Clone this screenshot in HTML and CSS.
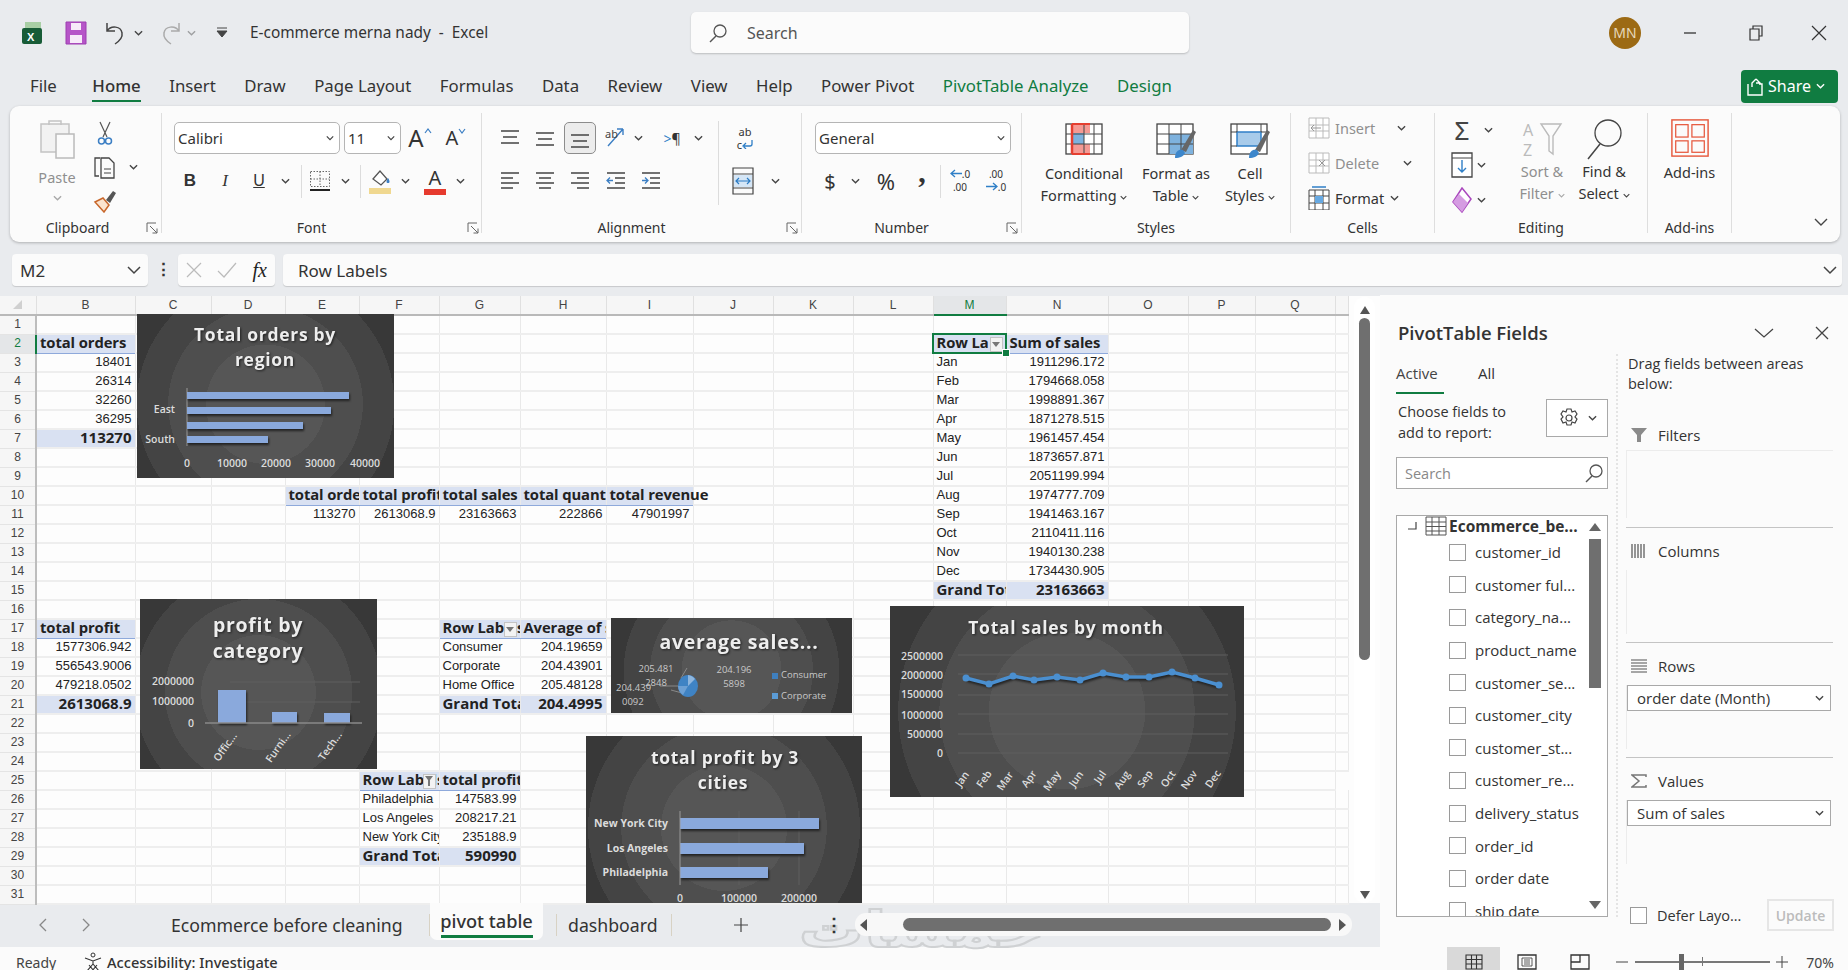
FILE: index.html
```html
<!DOCTYPE html>
<html lang="en">
<head>
<meta charset="utf-8">
<title>E-commerce merna nady - Excel</title>
<link rel="stylesheet" href="styles.css">
</head>
<body>
<svg class="defs" width="0" height="0">
  <symbol id="ch" viewBox="0 0 10 6"><path d="M1 1l4 4 4-4" fill="none" stroke="#444" stroke-width="1.5"/></symbol>
  <symbol id="launch" viewBox="0 0 12 12"><path d="M1 10V1h9M4 4l7 7M11 6.500V11H6.500" fill="none" stroke="#666" stroke-width="1"/></symbol>
  <symbol id="al-top" viewBox="0 0 22 20"><path d="M2 3h18M4 9h14M2 15h18" stroke="#444" stroke-width="1.500"/></symbol>
  <symbol id="al-mid" viewBox="0 0 22 20"><path d="M2 5h18M4 11h14M2 17h18" stroke="#444" stroke-width="1.500"/></symbol>
  <symbol id="al-bot" viewBox="0 0 22 20"><path d="M2 7h18M4 13h14M2 19h18" stroke="#444" stroke-width="1.500"/></symbol>
  <symbol id="al-l" viewBox="0 0 22 20"><path d="M2 2h18M2 7h12M2 12h18M2 17h12" stroke="#444" stroke-width="1.500"/></symbol>
  <symbol id="al-c" viewBox="0 0 22 20"><path d="M2 2h18M5 7h12M2 12h18M5 17h12" stroke="#444" stroke-width="1.500"/></symbol>
  <symbol id="al-r" viewBox="0 0 22 20"><path d="M2 2h18M8 7h12M2 12h18M8 17h12" stroke="#444" stroke-width="1.500"/></symbol>
  <symbol id="search" viewBox="0 0 20 20"><circle cx="12" cy="8" r="6" fill="none" stroke="#555" stroke-width="1.300"/><path d="M8 13l-6 6" stroke="#555" stroke-width="1.500"/></symbol>
</svg>

<header class="titlebar">
  <svg class="t-excel" width="20" height="24" viewBox="0 0 20 24"><rect x="3" y="1" width="16" height="11" fill="#a9cfa5"/><rect x="0" y="7" width="20" height="16" rx="2" fill="#185c37"/><text x="5" y="20" class="xl">X</text></svg>
  <svg class="t-save" width="22" height="24" viewBox="0 0 22 24"><path d="M1 1h20v22H1z" fill="#b655c8" stroke="#9d3fb0"/><rect x="6" y="2" width="10" height="7" fill="#f7eaf9"/><rect x="5" y="14" width="12" height="8" fill="#f7eaf9"/></svg>
  <svg class="t-undo" width="20" height="24" viewBox="0 0 20 24"><path d="M2 2v8h8M2 10c4-6 14-5 15 2 1 5-4 9-7 11" fill="none" stroke="#444" stroke-width="1.500"/></svg>
  <svg class="chv t-ch"><use href="#ch"/></svg>
  <svg class="t-redo" width="20" height="24" viewBox="0 0 20 24"><path d="M18 2v8h-8M18 10c-4-6-14-5-15 2-1 5 4 9 7 11" fill="none" stroke="#aaa" stroke-width="1.500"/></svg>
  <svg class="chv t-ch2 dim"><use href="#ch"/></svg>
  <svg class="t-cust" width="12" height="12" viewBox="0 0 12 12"><path d="M1 1h10M1 4h10L6 10z" fill="#444" stroke="#444"/></svg>
  <div class="doc-title">E-commerce merna nady&nbsp; -&nbsp; Excel</div>
  <div class="searchbox"><svg width="20" height="22"><use href="#search"/></svg><span>Search</span></div>
  <div class="spacer"></div>
  <div class="avatar">MN</div>
  <div class="win-btn"><svg width="14" height="14"><path d="M1 7h12" stroke="#333" stroke-width="1.300"/></svg></div>
  <div class="win-btn"><svg width="14" height="16"><path d="M1 4h9v11H1zM4 4V1h9v10h-3" fill="none" stroke="#333" stroke-width="1.200"/></svg></div>
  <div class="win-btn last"><svg width="16" height="16"><path d="M1 1l14 14M15 1L1 15" stroke="#333" stroke-width="1.200"/></svg></div>
</header>

<nav class="tabs">
  <span class="tab first">File</span>
  <span class="tab on">Home</span>
  <span class="tab">Insert</span>
  <span class="tab">Draw</span>
  <span class="tab">Page Layout</span>
  <span class="tab">Formulas</span>
  <span class="tab">Data</span>
  <span class="tab">Review</span>
  <span class="tab">View</span>
  <span class="tab">Help</span>
  <span class="tab">Power Pivot</span>
  <span class="tab green">PivotTable Analyze</span>
  <span class="tab green">Design</span>
  <div class="share"><svg width="16" height="20" viewBox="0 0 16 20"><path d="M1 8v11h14V8h-3M9 3L5 7v4M9 3l4 4-4 0" fill="none" stroke="#fff" stroke-width="1.400"/></svg><span>Share</span><svg class="chv wh"><use href="#ch"/></svg></div>
</nav>

<section class="ribbon">
  <div class="g g-clip">
    <div class="clip-body">
      <div class="paste">
        <svg width="38" height="42" viewBox="0 0 38 42"><path d="M3 6h28v28H3z" fill="#f2f2f2" stroke="#c4c4c4" stroke-width="1.500"/><path d="M11 7V3h12v4" fill="none" stroke="#c4c4c4" stroke-width="1.500"/><rect x="18" y="16" width="18" height="24" fill="#fbfbfb" stroke="#bbb" stroke-width="1.500"/></svg>
        <span class="dimtext">Paste</span>
        <svg class="chv dim"><use href="#ch"/></svg>
      </div>
      <div class="clip-small">
        <svg width="16" height="24" viewBox="0 0 16 24"><path d="M3 1l7 15M13 1L6 16" stroke="#555" stroke-width="1.200"/><circle cx="4.500" cy="20" r="3" fill="none" stroke="#3c7fc4" stroke-width="1.500"/><circle cx="11.500" cy="20" r="3" fill="none" stroke="#3c7fc4" stroke-width="1.500"/></svg>
        <div class="copyrow"><svg width="24" height="24" viewBox="0 0 24 24"><path d="M7 3H2v18h4M8 3h8l5 5v15H8z" fill="none" stroke="#444" stroke-width="1.300"/><path d="M11 14h7M11 18h7" stroke="#444"/></svg><svg class="chv"><use href="#ch"/></svg></div>
        <svg width="24" height="24" viewBox="0 0 24 24"><path d="M2 13l8-4 6 7-5 7z" fill="#fbe4cf" stroke="#c8672b" stroke-width="1.500"/><path d="M13 11l7-9 3 2-6 10z" fill="#555"/></svg>
      </div>
    </div>
    <div class="g-label">Clipboard</div>
    <svg class="launcher"><use href="#launch"/></svg>
  </div>

  <div class="g g-font">
    <div class="row row1">
      <div class="select w166"><span>Calibri</span><svg class="chv"><use href="#ch"/></svg></div>
      <div class="select w57 ml4"><span>11</span><svg class="chv"><use href="#ch"/></svg></div>
      <div class="slot w38"><span class="bigA">A</span><svg class="caret" width="8" height="6"><path d="M1 5l3-4 3 4" fill="none" stroke="#3c7fc4" stroke-width="1.200"/></svg></div>
      <div class="slot w34"><span class="midA">A</span><svg class="caret" width="8" height="6"><path d="M1 1l3 4 3-4" fill="none" stroke="#3c7fc4" stroke-width="1.200"/></svg></div>
    </div>
    <div class="row row2">
      <div class="slot w32 fb">B</div>
      <div class="slot w38 fi">I</div>
      <div class="slot w30 fu">U</div>
      <div class="slot w22"><svg class="chv"><use href="#ch"/></svg></div>
      <div class="slot w10"><i class="vsep"></i></div>
      <div class="slot w28"><svg width="22" height="22" viewBox="0 0 22 22"><path d="M1.500 1.500h19v15h-19zM11 1.500v15M1.500 9h19" fill="none" stroke="#666" stroke-dasharray="1.500 1.500"/><rect x="1" y="19" width="20" height="2" fill="#222"/></svg></div>
      <div class="slot w22"><svg class="chv"><use href="#ch"/></svg></div>
      <div class="slot w8"><i class="vsep"></i></div>
      <div class="slot w32"><svg width="24" height="26" viewBox="0 0 24 26"><path d="M5 11l7-8 7 8-6 6z" fill="#fff" stroke="#555" stroke-width="1.300"/><path d="M20 10c2 3 2 5 0 5s-2-2 0-5z" fill="#3c7fc4"/><rect x="1" y="20" width="22" height="6" fill="#f0d890"/></svg></div>
      <div class="slot w18"><svg class="chv"><use href="#ch"/></svg></div>
      <div class="slot w42 fcolor"><span>A</span><i></i></div>
      <div class="slot w8"><svg class="chv"><use href="#ch"/></svg></div>
    </div>
    <div class="g-label">Font</div>
    <svg class="launcher"><use href="#launch"/></svg>
  </div>

  <div class="g g-align">
    <div class="row row1">
      <div class="slot w36"><svg class="al"><use href="#al-top"/></svg></div>
      <div class="slot w34"><svg class="al"><use href="#al-mid"/></svg></div>
      <div class="slot w36"><div class="pressed"><svg class="al"><use href="#al-bot"/></svg></div></div>
      <div class="slot w36"><svg width="22" height="24" viewBox="0 0 22 24"><path d="M3 20L18 3M18 3v6M18 3h-6" fill="none" stroke="#3c7fc4" stroke-width="1.400"/><text x="0" y="12" class="tiny">ab</text></svg></div>
      <div class="slot w8"><svg class="chv"><use href="#ch"/></svg></div>
      <div class="slot w12"></div>
      <div class="slot w36 rtl"><b>&gt;</b>¶</div>
      <div class="slot w16"><svg class="chv"><use href="#ch"/></svg></div>
      <div class="slot w24"><i class="vsep tall"></i></div>
      <div class="slot w30 wrap"><span>ab</span><span>c<svg width="11" height="9" viewBox="0 0 11 9"><path d="M10 0v4a2 2 0 0 1-2 2H2M4 3L1 6l3 3" fill="none" stroke="#2f7fc7" stroke-width="1.300"/></svg></span></div>
    </div>
    <div class="row row2">
      <div class="slot w36"><svg class="al"><use href="#al-l"/></svg></div>
      <div class="slot w34"><svg class="al"><use href="#al-c"/></svg></div>
      <div class="slot w36"><svg class="al"><use href="#al-r"/></svg></div>
      <div class="slot w36"><svg class="al" viewBox="0 0 22 20"><path d="M2 2h18M10 7h10M10 12h10M2 17h18" stroke="#444" stroke-width="1.500"/><path d="M8 9.500H2M5 6.500l-3 3 3 3" fill="none" stroke="#3c7fc4" stroke-width="1.300"/></svg></div>
      <div class="slot w34"><svg class="al" viewBox="0 0 22 20"><path d="M2 2h18M10 7h10M10 12h10M2 17h18" stroke="#444" stroke-width="1.500"/><path d="M2 9.500h6M5 6.500l3 3-3 3" fill="none" stroke="#3c7fc4" stroke-width="1.300"/></svg></div>
      <div class="slot w38"></div>
      <div class="slot w24"></div>
      <div class="slot w26"><svg width="22" height="28" viewBox="0 0 22 28"><path d="M1 1h20v26H1zM1 7h20M1 21h20" fill="none" stroke="#444" stroke-width="1.200"/><rect x="2" y="8" width="18" height="12" fill="#d5e6f6"/><path d="M4 14h14M7 11l-3 3 3 3M15 11l3 3-3 3" fill="none" stroke="#2b7bc4" stroke-width="1.200"/></svg></div>
      <div class="slot w38"><svg class="chv"><use href="#ch"/></svg></div>
    </div>
    <div class="g-label">Alignment</div>
    <svg class="launcher"><use href="#launch"/></svg>
  </div>

  <div class="g g-num">
    <div class="row row1"><div class="select w196"><span>General</span><svg class="chv"><use href="#ch"/></svg></div></div>
    <div class="row row2">
      <div class="slot w30 dollar">$</div>
      <div class="slot w20"><svg class="chv"><use href="#ch"/></svg></div>
      <div class="slot w42 pct">%</div>
      <div class="slot w30 comma">,</div>
      <div class="slot w6"><i class="vsep"></i></div>
      <div class="slot w34 dec"><span><svg width="12" height="9" viewBox="0 0 12 9"><path d="M12 4.500H1M5 1L1 4.500 5 8" fill="none" stroke="#2f7fc7" stroke-width="1.300"/></svg>.0</span><span>.00</span></div>
      <div class="slot w38 dec"><span>.00</span><span><svg width="12" height="9" viewBox="0 0 12 9"><path d="M0 4.500h11M7 1l4 3.500L7 8" fill="none" stroke="#2f7fc7" stroke-width="1.300"/></svg>.0</span></div>
    </div>
    <div class="g-label">Number</div>
    <svg class="launcher"><use href="#launch"/></svg>
  </div>

  <div class="g g-styles">
    <div class="bigs">
      <div class="big w124">
        <svg width="40" height="38" viewBox="0 0 40 38"><rect x="2" y="4" width="36" height="30" fill="#fff" stroke="#444" stroke-width="1.300"/><rect x="8" y="4" width="18" height="9" fill="#f59a94"/><rect x="8" y="13" width="12" height="11" fill="#7eb2de"/><rect x="8" y="24" width="18" height="10" fill="#f59a94"/><path d="M2 14h36M2 24h36M8 4v30M20 4v30M30 4v30" stroke="#444"/><path d="M8 4v30" stroke="#e53f30" stroke-width="2.500"/><path d="M8 4h18M8 34h18" stroke="#e53f30" stroke-width="2"/></svg>
        <span>Conditional</span><span>Formatting <svg class="chv sm"><use href="#ch"/></svg></span>
      </div>
      <div class="big w60">
        <svg width="42" height="38" viewBox="0 0 42 38"><rect x="2" y="4" width="36" height="30" fill="#fff" stroke="#444" stroke-width="1.300"/><rect x="14" y="14" width="24" height="20" fill="#7eb2de"/><path d="M2 14h36M2 24h36M14 4v30M26 4v30" stroke="#444"/><path d="M26 30l12-20 3 2-10 20z" fill="#666"/><path d="M20 38c0-7 4-9 8-8l2 3c-1 3-5 5-10 5z" fill="#3c86cb"/></svg>
        <span>Format as</span><span>Table <svg class="chv sm"><use href="#ch"/></svg></span>
      </div>
      <div class="big w85">
        <svg width="42" height="38" viewBox="0 0 42 38"><rect x="2" y="4" width="36" height="30" fill="#fff" stroke="#444" stroke-width="1.300"/><rect x="8" y="12" width="24" height="14" fill="#a8cbea" stroke="#2f7fc7" stroke-width="1.500"/><path d="M2 12h6M32 12h6M2 26h6M8 4v8M32 4v8" stroke="#444"/><path d="M26 30l12-20 3 2-10 20z" fill="#666"/><path d="M20 38c0-7 4-9 8-8l2 3c-1 3-5 5-10 5z" fill="#3c86cb"/></svg>
        <span>Cell</span><span>Styles <svg class="chv sm"><use href="#ch"/></svg></span>
      </div>
    </div>
    <div class="g-label">Styles</div>
  </div>

  <div class="g g-cells">
    <div class="cellrows">
      <div class="cellrow dimtext"><svg width="22" height="24" viewBox="0 0 22 24"><path d="M1 2h20v20H1zM1 9h20M1 15h20M8 2v20M15 2v20" fill="#fff" stroke="#bbb"/><path d="M13 12H3M6 9l-3 3 3 3" fill="none" stroke="#999"/></svg><span class="w62 ml5">Insert</span><svg class="chv blk"><use href="#ch"/></svg></div>
      <div class="cellrow dimtext"><svg width="22" height="24" viewBox="0 0 22 24"><path d="M1 2h20v20H1zM1 9h20M1 15h20M8 2v20M15 2v20" fill="#fff" stroke="#bbb"/><path d="M11 9l6 6M17 9l-6 6" stroke="#999"/></svg><span class="w68 ml5">Delete</span><svg class="chv blk"><use href="#ch"/></svg></div>
      <div class="cellrow"><svg width="22" height="24" viewBox="0 0 22 24"><path d="M1 4h20v20H1zM1 10h20M1 17h20M7 4v20M15 4v20" fill="#fff" stroke="#444"/><rect x="7" y="10" width="8" height="7" fill="#67a9e2"/><path d="M4 1h14" stroke="#2f7fc7" stroke-width="1.500"/></svg><span class="w55 ml5">Format</span><svg class="chv"><use href="#ch"/></svg></div>
    </div>
    <div class="g-label">Cells</div>
  </div>

  <div class="g g-edit">
    <div class="editbody">
      <div class="editsmall">
        <div class="er"><span class="sigma">Σ</span><svg class="chv ml11"><use href="#ch"/></svg></div>
        <div class="er"><svg width="22" height="26" viewBox="0 0 22 26"><path d="M1 1h20v24H1z" fill="#fff" stroke="#444" stroke-width="1.300"/><path d="M1 6h20" stroke="#444"/><path d="M11 8v12M7 16l4 4 4-4" fill="none" stroke="#2f7fc7" stroke-width="1.400"/></svg><svg class="chv ml4"><use href="#ch"/></svg></div>
        <div class="er"><svg width="22" height="26" viewBox="0 0 22 26"><path d="M11 1l9 11-9 13-9-10z" fill="#fff" stroke="#a947bd" stroke-width="1.500"/><path d="M2 15l6-8 9 9-6 9z" fill="#d59ce2"/></svg><svg class="chv ml4"><use href="#ch"/></svg></div>
      </div>
      <div class="big w70 dimtext">
        <svg width="42" height="42" viewBox="0 0 42 42"><text x="2" y="18" class="az">A</text><text x="2" y="38" class="az">Z</text><path d="M20 6h20l-8 12v18l-4-3V18z" fill="none" stroke="#bbb" stroke-width="1.400"/></svg>
        <span>Sort &amp;</span><span>Filter <svg class="chv sm dim"><use href="#ch"/></svg></span>
      </div>
      <div class="big w54">
        <svg width="38" height="42" viewBox="0 0 38 42"><circle cx="23" cy="15" r="13" fill="none" stroke="#444" stroke-width="1.300"/><path d="M15 26L3 41" stroke="#444" stroke-width="1.500"/></svg>
        <span>Find &amp;</span><span>Select <svg class="chv sm"><use href="#ch"/></svg></span>
      </div>
    </div>
    <div class="g-label">Editing</div>
  </div>

  <div class="g g-add">
    <div class="big wfull">
      <svg width="40" height="42" viewBox="0 0 40 42"><rect x="1" y="2" width="38" height="38" fill="none" stroke="#e6573c" stroke-width="1.500"/><rect x="5" y="7" width="13" height="13" fill="none" stroke="#e6573c" stroke-width="1.300"/><rect x="22" y="7" width="13" height="13" fill="none" stroke="#e6573c" stroke-width="1.300"/><rect x="5" y="24" width="13" height="12" fill="none" stroke="#e6573c" stroke-width="1.300"/><rect x="22" y="24" width="13" height="12" fill="none" stroke="#e6573c" stroke-width="1.300"/></svg>
      <span>Add-ins</span>
    </div>
    <div class="g-label">Add-ins</div>
  </div>
  <svg class="collapse" width="14" height="9"><path d="M1 1l6 6 6-6" fill="none" stroke="#444" stroke-width="1.400"/></svg>
</section>

<section class="fbar">
  <div class="namebox"><span>M2</span><svg width="14" height="9"><path d="M1 1l6 6 6-6" fill="none" stroke="#444" stroke-width="1.500"/></svg></div>
  <div class="fdots">⋮</div>
  <div class="fxbox">
    <svg width="16" height="16"><path d="M1 1l14 14M15 1L1 15" stroke="#bbb" stroke-width="1.200"/></svg>
    <svg width="20" height="16"><path d="M1 9l6 6L19 1" fill="none" stroke="#bbb" stroke-width="1.200"/></svg>
    <span class="fx">fx</span>
  </div>
  <div class="finput"><span>Row Labels</span><svg width="14" height="9"><path d="M1 1l6 6 6-6" fill="none" stroke="#444" stroke-width="1.500"/></svg></div>
</section>

<main class="body">
  <div class="sheetcol">
    <div class="sheet">
      <table class="grid">
        <colgroup>
          <col class="c0"><col class="c99"><col class="c76"><col class="c74"><col class="c74"><col class="c80"><col class="c81"><col class="c86"><col class="c87"><col class="c80"><col class="c80"><col class="c80"><col class="c73"><col class="c102"><col class="c80"><col class="c67"><col class="c80"><col class="c13">
        </colgroup>
        <thead>
          <tr><th class="corner"><svg width="9" height="9"><path d="M9 0v9H0z" fill="#d0d0d0"/></svg></th><th>B</th><th>C</th><th>D</th><th>E</th><th>F</th><th>G</th><th>H</th><th>I</th><th>J</th><th>K</th><th>L</th><th class="sel-col">M</th><th>N</th><th>O</th><th>P</th><th>Q</th><th></th></tr>
        </thead>
        <tbody>
          <tr><th>1</th><td></td><td></td><td></td><td></td><td></td><td></td><td></td><td></td><td></td><td></td><td></td><td></td><td></td><td></td><td></td><td></td><td></td></tr>
          <tr><th class="sel-row">2</th><td class="h">total orders</td><td></td><td></td><td></td><td></td><td></td><td></td><td></td><td></td><td></td><td></td><td class="h active"><span class="clip">Row Labels</span><span class="dd"><svg width="8" height="5"><path d="M0 0h8L4 5z" fill="#777"/></svg></span><i class="handle"></i></td><td class="h">Sum of sales</td><td></td><td></td><td></td><td></td></tr>
          <tr><th>3</th><td class="n">18401</td><td></td><td></td><td></td><td></td><td></td><td></td><td></td><td></td><td></td><td></td><td>Jan</td><td class="n">1911296.172</td><td></td><td></td><td></td><td></td></tr>
          <tr><th>4</th><td class="n">26314</td><td></td><td></td><td></td><td></td><td></td><td></td><td></td><td></td><td></td><td></td><td>Feb</td><td class="n">1794668.058</td><td></td><td></td><td></td><td></td></tr>
          <tr><th>5</th><td class="n">32260</td><td></td><td></td><td></td><td></td><td></td><td></td><td></td><td></td><td></td><td></td><td>Mar</td><td class="n">1998891.367</td><td></td><td></td><td></td><td></td></tr>
          <tr><th>6</th><td class="n">36295</td><td></td><td></td><td></td><td></td><td></td><td></td><td></td><td></td><td></td><td></td><td>Apr</td><td class="n">1871278.515</td><td></td><td></td><td></td><td></td></tr>
          <tr><th>7</th><td class="t n">113270</td><td></td><td></td><td></td><td></td><td></td><td></td><td></td><td></td><td></td><td></td><td>May</td><td class="n">1961457.454</td><td></td><td></td><td></td><td></td></tr>
          <tr><th>8</th><td></td><td></td><td></td><td></td><td></td><td></td><td></td><td></td><td></td><td></td><td></td><td>Jun</td><td class="n">1873657.871</td><td></td><td></td><td></td><td></td></tr>
          <tr><th>9</th><td></td><td></td><td></td><td></td><td></td><td></td><td></td><td></td><td></td><td></td><td></td><td>Jul</td><td class="n">2051199.994</td><td></td><td></td><td></td><td></td></tr>
          <tr><th>10</th><td></td><td></td><td></td><td class="h">total orders</td><td class="h">total profit</td><td class="h">total sales</td><td class="h">total quantity</td><td class="h over">total revenue</td><td></td><td></td><td></td><td>Aug</td><td class="n">1974777.709</td><td></td><td></td><td></td><td></td></tr>
          <tr><th>11</th><td></td><td></td><td></td><td class="n">113270</td><td class="n">2613068.9</td><td class="n">23163663</td><td class="n">222866</td><td class="n">47901997</td><td></td><td></td><td></td><td>Sep</td><td class="n">1941463.167</td><td></td><td></td><td></td><td></td></tr>
          <tr><th>12</th><td></td><td></td><td></td><td></td><td></td><td></td><td></td><td></td><td></td><td></td><td></td><td>Oct</td><td class="n">2110411.116</td><td></td><td></td><td></td><td></td></tr>
          <tr><th>13</th><td></td><td></td><td></td><td></td><td></td><td></td><td></td><td></td><td></td><td></td><td></td><td>Nov</td><td class="n">1940130.238</td><td></td><td></td><td></td><td></td></tr>
          <tr><th>14</th><td></td><td></td><td></td><td></td><td></td><td></td><td></td><td></td><td></td><td></td><td></td><td>Dec</td><td class="n">1734430.905</td><td></td><td></td><td></td><td></td></tr>
          <tr><th>15</th><td></td><td></td><td></td><td></td><td></td><td></td><td></td><td></td><td></td><td></td><td></td><td class="t">Grand Total</td><td class="t n">23163663</td><td></td><td></td><td></td><td></td></tr>
          <tr><th>16</th><td></td><td></td><td></td><td></td><td></td><td></td><td></td><td></td><td></td><td></td><td></td><td></td><td></td><td></td><td></td><td></td><td></td></tr>
          <tr><th>17</th><td class="h">total profit</td><td></td><td></td><td></td><td></td><td class="h">Row Labels<span class="dd"><svg width="8" height="5"><path d="M0 0h8L4 5z" fill="#777"/></svg></span></td><td class="h">Average of sales</td><td></td><td></td><td></td><td></td><td></td><td></td><td></td><td></td><td></td><td></td></tr>
          <tr><th>18</th><td class="n">1577306.942</td><td></td><td></td><td></td><td></td><td>Consumer</td><td class="n">204.19659</td><td></td><td></td><td></td><td></td><td></td><td></td><td></td><td></td><td></td><td></td></tr>
          <tr><th>19</th><td class="n">556543.9006</td><td></td><td></td><td></td><td></td><td>Corporate</td><td class="n">204.43901</td><td></td><td></td><td></td><td></td><td></td><td></td><td></td><td></td><td></td><td></td></tr>
          <tr><th>20</th><td class="n">479218.0502</td><td></td><td></td><td></td><td></td><td>Home Office</td><td class="n">205.48128</td><td></td><td></td><td></td><td></td><td></td><td></td><td></td><td></td><td></td><td></td></tr>
          <tr><th>21</th><td class="t n">2613068.9</td><td></td><td></td><td></td><td></td><td class="t">Grand Total</td><td class="t n">204.4995</td><td></td><td></td><td></td><td></td><td></td><td></td><td></td><td></td><td></td><td></td></tr>
          <tr><th>22</th><td></td><td></td><td></td><td></td><td></td><td></td><td></td><td></td><td></td><td></td><td></td><td></td><td></td><td></td><td></td><td></td><td></td></tr>
          <tr><th>23</th><td></td><td></td><td></td><td></td><td></td><td></td><td></td><td></td><td></td><td></td><td></td><td></td><td></td><td></td><td></td><td></td><td></td></tr>
          <tr><th>24</th><td></td><td></td><td></td><td></td><td></td><td></td><td></td><td></td><td></td><td></td><td></td><td></td><td></td><td></td><td></td><td></td><td></td></tr>
          <tr><th>25</th><td></td><td></td><td></td><td></td><td class="h">Row Labels<span class="dd"><svg width="8" height="11"><path d="M0 0h8L5 4v6H3V4z" fill="#777"/></svg></span></td><td class="h">total profit</td><td></td><td></td><td></td><td></td><td></td><td></td><td></td><td></td><td></td><td></td></tr>
          <tr><th>26</th><td></td><td></td><td></td><td></td><td>Philadelphia</td><td class="n">147583.99</td><td></td><td></td><td></td><td></td><td></td><td></td><td></td><td></td><td></td><td></td><td></td></tr>
          <tr><th>27</th><td></td><td></td><td></td><td></td><td>Los Angeles</td><td class="n">208217.21</td><td></td><td></td><td></td><td></td><td></td><td></td><td></td><td></td><td></td><td></td><td></td></tr>
          <tr><th>28</th><td></td><td></td><td></td><td></td><td>New York City</td><td class="n">235188.9</td><td></td><td></td><td></td><td></td><td></td><td></td><td></td><td></td><td></td><td></td><td></td></tr>
          <tr><th>29</th><td></td><td></td><td></td><td></td><td class="t">Grand Total</td><td class="t n">590990</td><td></td><td></td><td></td><td></td><td></td><td></td><td></td><td></td><td></td><td></td><td></td></tr>
          <tr><th>30</th><td></td><td></td><td></td><td></td><td></td><td></td><td></td><td></td><td></td><td></td><td></td><td></td><td></td><td></td><td></td><td></td><td></td></tr>
          <tr><th>31</th><td></td><td></td><td></td><td></td><td></td><td></td><td></td><td></td><td></td><td></td><td></td><td></td><td></td><td></td><td></td><td></td><td></td></tr>
        </tbody>
      </table>

      <div class="chart ch1">
        <svg width="257" height="164" viewBox="0 0 257 164">
          <text x="128" y="27" class="ct s18">Total orders by</text>
          <text x="128" y="52" class="ct s18">region</text>
          <path d="M50 74v58" stroke="#999"/>
          <rect x="50" y="78" width="162" height="7" class="bar"/><rect x="50" y="93" width="144" height="7" class="bar"/><rect x="50" y="108" width="116" height="7" class="bar"/><rect x="50" y="122" width="81" height="7" class="bar"/>
          <text x="38" y="99" class="al-e">East</text><text x="38" y="129" class="al-e">South</text>
          <text x="50" y="153" class="ax">0</text><text x="95" y="153" class="ax">10000</text><text x="139" y="153" class="ax">20000</text><text x="183" y="153" class="ax">30000</text><text x="228" y="153" class="ax">40000</text>
        </svg>
      </div>

      <div class="chart ch2">
        <svg width="237" height="170" viewBox="0 0 237 170">
          <text x="118" y="33" class="ct s20">profit by</text>
          <text x="118" y="59" class="ct s20">category</text>
          <path d="M90 83h130M90 103h130" stroke="#5f5f5f"/>
          <text x="54" y="86" class="al-e">2000000</text><text x="54" y="106" class="al-e">1000000</text><text x="54" y="128" class="al-e">0</text>
          <rect x="78" y="91" width="28" height="33" class="bar"/><rect x="132" y="113" width="25" height="11" class="bar"/><rect x="184" y="114" width="26" height="10" class="bar"/>
          <path d="M65 124h157" stroke="#8a8a8a" stroke-width="1.500"/>
          <text class="ax" transform="translate(88 150) rotate(-55)">Offic...</text><text class="ax" transform="translate(141 150) rotate(-55)">Furni...</text><text class="ax" transform="translate(193 149) rotate(-55)">Tech...</text>
        </svg>
      </div>

      <div class="chart ch3">
        <svg width="241" height="95" viewBox="0 0 241 95">
          <text x="128" y="31" class="ct s19">average sales...</text>
          <path d="M77 68L49 68M70 60L76 50M60 72L71 75" stroke="#888" fill="none"/>
          <ellipse cx="77" cy="68" rx="10" ry="11" fill="#3f83c4"/><path d="M77 68V57a10 11 0 0 1 7 4z" fill="#8fb6dd"/><path d="M77 68l-10 0a10 11 0 0 0 5 9z" fill="#6da0d4"/>
          <text x="45" y="54" class="pl">205.481</text><text x="45" y="68" class="pl">2848</text>
          <text x="123" y="55" class="pl">204.196</text><text x="123" y="69" class="pl">5898</text>
          <text x="5" y="73" class="pl ls">204.439</text><text x="11" y="87" class="pl ls">0092</text>
          <rect x="161" y="55" width="6" height="6" fill="#3f7fbd"/><text x="170" y="60" class="pl ls">Consumer</text>
          <rect x="161" y="75" width="6" height="6" fill="#5b9bd5"/><text x="170" y="81" class="pl ls">Corporate</text>
        </svg>
      </div>

      <div class="chart ch4">
        <svg width="276" height="167" viewBox="0 0 276 167">
          <text x="139" y="28" class="ct s18">total profit by 3</text>
          <text x="137" y="53" class="ct s18">cities</text>
          <path d="M153 75v74M213 75v74" stroke="#5f5f5f"/>
          <rect x="94" y="82" width="139" height="11" class="bar"/><rect x="94" y="107" width="124" height="11" class="bar"/><rect x="94" y="131" width="88" height="11" class="bar"/>
          <path d="M94 75v74" stroke="#999"/>
          <text x="82" y="91" class="al-e b">New York City</text><text x="82" y="116" class="al-e b">Los Angeles</text><text x="82" y="140" class="al-e b">Philadelphia</text>
          <text x="94" y="166" class="ax">0</text><text x="153" y="166" class="ax">100000</text><text x="213" y="166" class="ax">200000</text>
        </svg>
      </div>

      <div class="chart ch5">
        <svg width="354" height="191" viewBox="0 0 354 191">
          <text x="176" y="28" class="ct s18">Total sales by month</text>
          <path d="M68 49h270M68 68h270M68 89h270M68 108h270M68 128h270M68 147h270" stroke="#5f5f5f"/>
          <text x="53" y="54" class="al-e">2500000</text><text x="53" y="73" class="al-e">2000000</text><text x="53" y="92" class="al-e">1500000</text><text x="53" y="113" class="al-e">1000000</text><text x="53" y="132" class="al-e">500000</text><text x="53" y="151" class="al-e">0</text>
          <polyline class="line" points="76,72 99,78 123,70 144,74 167,71 190,74 213,67 236,71 259,71 282,66 305,72 329,79"/>
          <g class="dots"><circle cx="76" cy="72" r="3.500"/><circle cx="99" cy="78" r="3.500"/><circle cx="123" cy="70" r="3.500"/><circle cx="144" cy="74" r="3.500"/><circle cx="167" cy="71" r="3.500"/><circle cx="190" cy="74" r="3.500"/><circle cx="213" cy="67" r="3.500"/><circle cx="236" cy="71" r="3.500"/><circle cx="259" cy="71" r="3.500"/><circle cx="282" cy="66" r="3.500"/><circle cx="305" cy="72" r="3.500"/><circle cx="329" cy="79" r="3.500"/></g>
          <g class="ax mo">
            <text transform="translate(75 175) rotate(-55)">Jan</text><text transform="translate(97 175) rotate(-55)">Feb</text><text transform="translate(118 177) rotate(-55)">Mar</text><text transform="translate(142 175) rotate(-55)">Apr</text><text transform="translate(165 177) rotate(-55)">May</text><text transform="translate(189 175) rotate(-55)">Jun</text><text transform="translate(213 173) rotate(-55)">Jul</text><text transform="translate(235 176) rotate(-55)">Aug</text><text transform="translate(258 175) rotate(-55)">Sep</text><text transform="translate(281 175) rotate(-55)">Oct</text><text transform="translate(302 176) rotate(-55)">Nov</text><text transform="translate(326 175) rotate(-55)">Dec</text>
          </g>
        </svg>
      </div>

      <div class="vscroll">
        <svg width="10" height="8"><path d="M0 8L5 0l5 8z" fill="#555"/></svg>
        <div class="vtrack"><i></i></div>
        <svg width="10" height="8"><path d="M0 0l5 8 5-8z" fill="#555"/></svg>
      </div>
    </div>

    <div class="sheettabs">
      <svg class="arr" width="9" height="14"><path d="M8 1L2 7l6 6" fill="none" stroke="#888" stroke-width="1.300"/></svg>
      <svg class="arr a2" width="9" height="14"><path d="M1 1l6 6-6 6" fill="none" stroke="#888" stroke-width="1.300"/></svg>
      <span class="stab s1">Ecommerce before cleaning</span>
      <i class="tsep ts1"></i>
      <span class="stab active-tab"><b>pivot table</b></span>
      <i class="tsep ts2"></i>
      <span class="stab s3">dashboard</span>
      <i class="tsep ts2"></i>
      <svg class="plus" width="14" height="14"><path d="M7 0v14M0 7h14" stroke="#444" stroke-width="1.200"/></svg>
      <span class="tdots">⋮</span>
      <div class="hscroll">
        <svg width="7" height="12"><path d="M7 0v12L0 6z" fill="#555"/></svg>
        <i></i>
        <svg width="7" height="12"><path d="M0 0v12l7-6z" fill="#555"/></svg>
      </div>
    </div>
    <div class="watermark">خمسات</div>
  </div>

  <aside class="panel">
    <div class="p-head">
      <span class="p-title">PivotTable Fields</span>
      <svg class="p-ch" width="20" height="10"><path d="M1 1l9 8 9-8" fill="none" stroke="#444" stroke-width="1.300"/></svg>
      <svg class="p-x" width="14" height="14"><path d="M1 1l12 12M13 1L1 13" stroke="#444" stroke-width="1.300"/></svg>
    </div>
    <div class="p-cols">
      <div class="p-left">
        <div class="p-tabs"><span class="ptab on">Active</span><span class="ptab">All</span></div>
        <div class="p-choose">
          <div>Choose fields to<br>add to report:</div>
          <div class="gear"><svg width="22" height="22" viewBox="0 0 22 22"><path d="M9 2h4l1 3 3-1 2 3-2 3 2 2-2 4-3-1-1 3H9l-1-3-3 1-2-4 2-2-2-3 2-3 3 1z" fill="none" stroke="#444" stroke-width="1.200"/><circle cx="11" cy="11" r="3" fill="none" stroke="#444" stroke-width="1.200"/></svg><svg class="chv"><use href="#ch"/></svg></div>
        </div>
        <div class="p-search"><span>Search</span><svg width="20" height="20"><use href="#search"/></svg></div>
        <div class="p-list">
          <div class="fieldhead"><svg width="10" height="10" class="tw"><path d="M9 1v7H1" fill="none" stroke="#444" stroke-width="1.200"/></svg><svg width="22" height="20" viewBox="0 0 22 20"><path d="M1 1h20v18H1zM1 6h20M1 10.500h20M1 15h20M7 1v18M14 1v18" fill="none" stroke="#555"/></svg><b>Ecommerce_be...</b></div>
          <div class="field"><i></i>customer_id</div>
          <div class="field"><i></i>customer ful...</div>
          <div class="field"><i></i>category_na...</div>
          <div class="field"><i></i>product_name</div>
          <div class="field"><i></i>customer_se...</div>
          <div class="field"><i></i>customer_city</div>
          <div class="field"><i></i>customer_st...</div>
          <div class="field"><i></i>customer_re...</div>
          <div class="field"><i></i>delivery_status</div>
          <div class="field"><i></i>order_id</div>
          <div class="field"><i></i>order date</div>
          <div class="field"><i></i>ship date</div>
          <div class="lscroll"><svg width="12" height="8"><path d="M0 8L6 0l6 8z" fill="#666"/></svg><i></i><svg class="ldown" width="12" height="8"><path d="M0 0l6 8 6-8z" fill="#666"/></svg></div>
        </div>
      </div>
      <div class="p-right">
        <div class="p-drag">Drag fields between areas below:</div>
        <div class="area">
          <div class="a-label"><svg width="16" height="16" viewBox="0 0 16 16"><path d="M0 1h16L10 8v7H6V8z" fill="#8a8a8a"/></svg>Filters</div>
          <div class="a-box lined"></div>
        </div>
        <div class="area div">
          <div class="a-label"><svg width="16" height="14" viewBox="0 0 16 14"><path d="M1 0v14M4 0v14M7 0v14M10 0v14M13 0v14" stroke="#8a8a8a" stroke-width="1.800"/></svg>Columns</div>
          <div class="a-box"></div>
        </div>
        <div class="area div">
          <div class="a-label"><svg width="16" height="14" viewBox="0 0 16 14"><path d="M0 1h16M0 4h16M0 7h16M0 10h16M0 13h16" stroke="#8a8a8a" stroke-width="1.500"/></svg>Rows</div>
          <div class="a-box"><div class="a-drop"><span>order date (Month)</span><svg class="chv"><use href="#ch"/></svg></div></div>
        </div>
        <div class="area div">
          <div class="a-label"><svg width="16" height="14" viewBox="0 0 16 14"><path d="M15 3V1H1l7 6-7 6h14v-2" fill="none" stroke="#777" stroke-width="1.500"/></svg>Values</div>
          <div class="a-box"><div class="a-drop"><span>Sum of sales</span><svg class="chv"><use href="#ch"/></svg></div></div>
        </div>
        <div class="p-defer"><i></i><span>Defer Layo...</span><button class="update" type="button">Update</button></div>
      </div>
    </div>
  </aside>
</main>

<footer class="status">
  <span class="ready">Ready</span>
  <svg class="acc" width="20" height="20" viewBox="0 0 20 20"><circle cx="10" cy="3" r="2" fill="none" stroke="#333"/><path d="M2 6l8 3 8-3M10 9v3M4 19l6-7 6 7M9 19l5-6M11 19l-5-6" fill="none" stroke="#333" stroke-width="1.100"/></svg>
  <span class="acc-t">Accessibility: Investigate</span>
  <div class="spacer"></div>
  <div class="view on"><svg width="18" height="16" viewBox="0 0 18 16"><path d="M1 1h16v14H1zM1 5.500h16M1 10h16M6.500 1v14M11.500 1v14" fill="none" stroke="#333" stroke-width="1.100"/></svg></div>
  <div class="view"><svg width="20" height="16" viewBox="0 0 20 16"><path d="M1 1h18v14H1z" fill="none" stroke="#333" stroke-width="1.300"/><path d="M5 4h10v8H5zM7 6h6M7 8h6M7 10h6" fill="none" stroke="#333" stroke-width=".8"/></svg></div>
  <div class="view"><svg width="20" height="16" viewBox="0 0 20 16"><path d="M1 1h18v14H1zM1 8h9V1M10 8V1" fill="none" stroke="#333" stroke-width="1.300"/></svg></div>
  <svg class="z-minus" width="12" height="2"><path d="M0 1h12" stroke="#444"/></svg>
  <div class="slider"><i></i><b></b></div>
  <svg class="z-plus" width="12" height="12"><path d="M6 0v12M0 6h12" stroke="#444"/></svg>
  <span class="zoomv">70%</span>
</footer>
</body>
</html>
```

FILE: styles.css
```css
* { box-sizing: border-box; }
html, body { margin: 0; padding: 0; }
body {
  width: 1848px; height: 970px; overflow: hidden;
  background: #e9ebee; color: #333;
  font-family: "Noto Sans", "Open Sans", "Liberation Sans", sans-serif;
  font-size: 15px;
}
.defs { position: absolute; }
.spacer { flex: 1; }
.chv { width: 9px; height: 6px; flex: none; display: inline-block; }
.chv.sm { width: 7px; height: 5px; vertical-align: middle; }
.chv.dim { opacity: .45; }
.chv.wh { filter: invert(1) brightness(2); }
.dimtext { color: #8f8f8f; }

/* title bar */
.titlebar { height: 58px; display: flex; align-items: center; padding: 7px 0 0 22px; }
.t-excel, .t-save, .t-undo, .t-redo, .t-cust { flex: none; }
.t-save { margin-left: 23px; }
.t-undo { margin-left: 18px; }
.t-ch { margin-left: 9px; }
.t-redo { margin-left: 18px; }
.t-ch2 { margin-left: 6px; }
.t-cust { margin-left: 20px; }
.xl { font: bold 11px "Liberation Sans", sans-serif; fill: #fff; }
.doc-title { margin-left: 22px; flex: 0 0 441px; font-size: 15.400px; }
.searchbox {
  width: 498px; height: 41px; background: #fbfbfb; border-radius: 5px; flex: none;
  box-shadow: 0 1px 2px rgba(0,0,0,.2); display: flex; align-items: center; padding-left: 17px; gap: 19px;
  color: #555; font-size: 16px;
}
.avatar {
  width: 32px; height: 32px; border-radius: 50%; background: #9c6a14; color: #e7d9bd; flex: none;
  display: flex; align-items: center; justify-content: center; font-size: 14px; margin-right: 16px;
}
.win-btn { width: 66px; display: flex; justify-content: center; flex: none; }
.win-btn.last { width: 59px; }

/* ribbon tabs */
.tabs { height: 48px; display: flex; align-items: center; padding: 16px 10px 8px 30px; gap: 28.500px; font-size: 16.800px; position: relative; }
.tab { line-height: 30px; position: relative; white-space: nowrap; }
.tab.first { margin-right: 7px; }
.tab.on { font-weight: 500; }
.tab.on::after { content: ""; position: absolute; left: 0; right: 0; bottom: -1px; height: 2px; background: #107c41; }
.tab.green { color: #107c41; }
.share {
  margin-left: auto; width: 97px; height: 33px; background: #107c41; color: #fff; border-radius: 4px; flex: none;
  display: flex; align-items: center; gap: 5px; padding-left: 6px; font-size: 16px;
}

/* ribbon */
.ribbon {
  margin: 0 8px 0 10px; height: 136px; background: #fbfbfb; border-radius: 9px;
  box-shadow: 0 1px 3px rgba(0,0,0,.25); display: flex; padding-top: 7px; position: relative;
  font-size: 14px;
}
.g { height: 120px; border-right: 1px solid #dedede; position: relative; display: flex; flex-direction: column; flex: none; }
.g-label { position: absolute; left: 0; right: 0; top: 105px; text-align: center; font-size: 14px; line-height: 20px; color: #333; }
.launcher { position: absolute; right: 3px; top: 109px; width: 12px; height: 12px; }
.g-clip { width: 152px; }
.g-clip .g-label { right: 16px; }
.clip-body { display: flex; padding: 5px 0 0 16px; }
.paste { width: 62px; display: flex; flex-direction: column; align-items: center; flex: none; font-size: 14.500px; line-height: 20px; }
.paste > svg:first-child { margin-bottom: 7px; }
.paste .chv { margin-top: 8px; }
.clip-small { display: flex; flex-direction: column; align-items: flex-start; margin-left: 3px; margin-top: -2px; height: 105px; }
.clip-small > svg { height: 24px; margin-left: 2px; margin-top: 5px; margin-bottom: 5px; }
.clip-small > svg:first-child { margin-left: 6px; }
.copyrow { display: flex; align-items: center; gap: 12px; margin: 5px 0 5px 2px; height: 24px; }
.g-font { width: 320px; padding-left: 12px; }
.g-font .launcher { right: 2px; }
.g-font .g-label { right: 20px; }
.g-align { width: 320px; padding-left: 10px; }
.g-align .g-label { right: 20px; }
.g-num { width: 220px; padding-left: 13px; }
.g-num .g-label { right: 20px; }
.g-styles { width: 269px; }
.g-cells { width: 144px; padding-left: 17px; }
.g-edit { width: 213px; padding-left: 16px; }
.g-add { width: 84px; }

.row { display: flex; flex: none; height: 32px; align-items: center; }
.row1 { margin-top: 9px; }
.row2 { margin-top: 11px; }
.slot { display: flex; align-items: center; justify-content: center; height: 32px; flex: none; position: relative; }
.w6{width:6px}.w8{width:8px}.w10{width:10px}.w12{width:12px}.w16{width:16px}.w18{width:18px}.w20{width:20px}.w22{width:22px}.w24{width:24px}.w26{width:26px}.w28{width:28px}.w30{width:30px}.w32{width:32px}.w34{width:34px}.w36{width:36px}.w38{width:38px}.w42{width:42px}.w54{width:54px}.w55{width:55px}.w57{width:57px}.w60{width:60px}.w62{width:62px}.w68{width:68px}.w70{width:70px}.w85{width:85px}.w124{width:124px}.w166{width:166px}.w196{width:196px}.wfull{width:100%}
.ml4{margin-left:4px}.ml5{margin-left:5px}.ml11{margin-left:11px}
.select {
  height: 32px; border: 1.500px solid #b5b5b5; border-radius: 5px; background: #fff; flex: none;
  display: flex; align-items: center; justify-content: space-between; padding: 0 5px 0 3px;
  font-size: 15px; color: #333;
}
.select .chv { width: 8px; }
.bigA { font-size: 24px; line-height: 1; color: #333; }
.midA { font-size: 20px; line-height: 1; color: #333; }
.caret { margin-bottom: 14px; }
.fb { font: bold 17px "Liberation Sans", sans-serif; }
.fi { font: italic 17px "Liberation Serif", serif; }
.fu { font: 16px "Liberation Sans", sans-serif; text-decoration: underline; }
.vsep { display: block; width: 1px; height: 33px; background: #dcdcdc; }
.vsep.tall { height: 84px; position: absolute; top: -1px; left: 12px; }
.fcolor { flex-direction: column; }
.fcolor span { font-size: 20px; line-height: 22px; }
.fcolor i { display: block; width: 22px; height: 6px; background: #e63a2e; }
.al { width: 22px; height: 20px; }
.pressed { width: 32px; height: 32px; border: 1.500px solid #8c8c8c; border-radius: 5px; background: #ececec; display: flex; align-items: center; justify-content: center; }
.tiny { font-size: 11px; fill: #444; }
.rtl { font-size: 14px; color: #333; }
.rtl b { color: #2f7fc7; font-weight: 400; }
.wrap { flex-direction: column; font-size: 11px; line-height: 13px; }
.dollar { font-size: 20px; }
.pct { font-size: 22px; }
.comma { font: bold 30px "Liberation Serif", serif; padding-bottom: 18px; }
.dec { flex-direction: column; font-size: 10px; line-height: 13px; }

.bigs { display: flex; }
.big { display: flex; flex-direction: column; align-items: center; flex: none; font-size: 14.500px; line-height: 22px; white-space: nowrap; padding-top: 7px; }
.big > svg:first-child { height: 38px; margin-bottom: 4px; flex: none; }
.w85 { padding-left: 3px; }
.g-add .big > svg:first-child { height: 40px; margin-bottom: 3px; margin-top: -2px; }

.cellrows { margin-top: -3px; }
.cellrow { height: 35px; display: flex; align-items: center; font-size: 14.500px; }
.cellrow span { display: inline-block; }
.editbody { display: flex; }
.editsmall { width: 56px; margin-top: -1px; flex: none; }
.er { height: 35px; display: flex; align-items: center; }
.sigma { font-size: 26px; line-height: 1; width: 22px; text-align: center; color: #444; }
.g-edit .big > svg:first-child { height: 42px; margin-bottom: 0; margin-top: -2px; }
.az { font-size: 16px; fill: #bbb; }
.collapse { position: absolute; right: 12px; top: 112px; }

/* formula bar */
.fbar { display: flex; height: 32px; margin: 12px 6px 0 12px; align-items: stretch; font-size: 17px; }
.namebox, .fxbox, .finput { background: #fbfbfb; border-radius: 4px; box-shadow: 0 1px 1px rgba(0,0,0,.15); display: flex; align-items: center; flex: none; }
.namebox { width: 136px; justify-content: space-between; padding: 0 7px 0 8px; }
.fdots { width: 30px; text-align: center; line-height: 30px; font-size: 17px; font-weight: 700; }
.fxbox { width: 97px; padding: 0 8px; justify-content: space-between; }
.fx { font: italic 20px "Liberation Serif", serif; color: #222; }
.finput { margin-left: 8px; flex: 1; justify-content: space-between; padding: 0 5px 0 15px; }

/* body */
.body { display: flex; height: 652px; margin-top: 9px; }
.sheetcol { width: 1380px; flex: none; position: relative; padding-top: 1px; }
.sheet { position: relative; height: 607px; background: #fdfdfd; }
.grid {
  width: 1348px; border-collapse: collapse; table-layout: fixed;
  font-family: "Liberation Sans", sans-serif; font-size: 13px; color: #222;
}
.c0{width:36px}.c99{width:99px}.c76{width:76px}.c74{width:74px}.c80{width:80px}.c81{width:81px}.c86{width:86px}.c87{width:87px}.c73{width:73px}.c102{width:102px}.c67{width:67px}.c13{width:13px}
.grid thead th {
  height: 16px; padding: 0; font-weight: 400; font-size: 12px; color: #444; background: #f6f6f6;
  border-right: 1px solid #e0e0e0; border-bottom: 2px solid #b9b9b9; line-height: 14px; overflow: hidden;
}
.grid tbody th {
  padding: 0; height: 19px; font-weight: 400; font-size: 12px; line-height: 15px; color: #444; background: #f6f6f6;
  border-right: 2px solid #bdbdbd; border-bottom: 1px solid #e4e4e4;
}
.grid td {
  height: 19px; padding: 0 3px 2px; border-right: 1px solid #e9e9e9; border-bottom: 2px solid #eeeeee;
  white-space: nowrap; overflow: hidden; position: relative; line-height: 15px;
}
.grid tr { height: 19px; }
.grid .n { text-align: right; }
.grid .h { background: #d9e1f2; font: bold 14.800px/15px "Open Sans", sans-serif; border-bottom: 1px solid #8ea9db; letter-spacing: -.1px; }
.grid .t { background: #d9e1f2; font: bold 15px/15px "Open Sans", sans-serif; border-top: 1px solid #8ea9db; }
.grid .over { overflow: visible; }
.grid .sel-col { background: #e4e6e8; color: #107c41; border-bottom: 2px solid #107c41; }
.grid .sel-row { background: #e4e6e8; color: #107c41; border-right: 2px solid #107c41; }
.grid .active { overflow: visible; outline: 2px solid #107c41; outline-offset: -1px; z-index: 2; }
.clip { display: block; width: 52px; overflow: hidden; }
.dd {
  position: absolute; right: 3px; top: 2px; width: 13px; height: 15px; background: #f3f3f3; border: 1px solid #c4c4c4;
  display: flex; align-items: center; justify-content: center;
}
.handle { position: absolute; right: -4px; bottom: -4px; width: 6px; height: 6px; background: #107c41; border: 1px solid #fff; box-sizing: content-box; z-index: 3; }

/* charts */
.chart {
  position: absolute; overflow: hidden;
  background: radial-gradient(circle farthest-corner at 50% 55%, #565656 0 38%, #4e4e4e 38% 62%, #444 62% 82%, #383838 82% 100%);
  z-index: 3;
}
.chart svg { display: block; }
.ch1 { left: 137px; top: 18px; width: 257px; height: 164px; }
.ch2 { left: 140px; top: 303px; width: 237px; height: 170px; }
.ch3 { left: 611px; top: 322px; width: 241px; height: 95px; }
.ch4 { left: 586px; top: 440px; width: 276px; height: 167px; }
.ch5 { left: 890px; top: 310px; width: 354px; height: 191px; }
.ct { font-family: "Open Sans", sans-serif; font-weight: 700; fill: #eee; text-anchor: middle; letter-spacing: .7px; filter: drop-shadow(1px 1px 1px #222); }
.s18 { font-size: 17.500px; }
.s19 { font-size: 19.500px; }
.s20 { font-size: 19.500px; }
.bar { fill: #8aa9dc; filter: drop-shadow(1px 2px 1px #222); }
.al-e { font: 600 10.500px "Open Sans", sans-serif; fill: #dcdcdc; text-anchor: end; }
.al-e.b { font-weight: 700; }
.ax { font: 600 10.500px "Open Sans", sans-serif; fill: #dcdcdc; text-anchor: middle; }
.mo text { text-anchor: middle; }
.pl { font: 9.500px "Open Sans", sans-serif; fill: #c8c8c8; text-anchor: middle; }
.pl.ls { text-anchor: start; }
.line { fill: none; stroke: #4a8fd0; stroke-width: 3.500; filter: drop-shadow(1px 2px 1px #222); }
.dots circle { fill: #4a8fd0; }

/* vertical scrollbar */
.vscroll {
  position: absolute; left: 1354px; top: 1px; width: 21px; height: 606px; background: #fff; border-radius: 10px;
  display: flex; flex-direction: column; align-items: center; padding-top: 9px; gap: 4px;
}
.vtrack { flex: 1; width: 11px; }
.vtrack i { display: block; width: 11px; height: 342px; border-radius: 6px; background: #6f6f6f; }
.vscroll svg:last-child { margin-bottom: 4px; }

/* sheet tabs */
.sheettabs { height: 44px; display: flex; align-items: center; font-size: 17.700px; position: relative; padding-left: 38px; }
.arr { flex: none; }
.a2 { margin-left: 35px; }
.stab { white-space: nowrap; flex: none; }
.s1 { margin-left: 80px; width: 232px; }
.tsep { width: 1px; height: 22px; background: #d8d2c4; flex: none; }
.ts1 { margin-left: 26px; }
.ts2 { margin-left: 13px; }
.active-tab { background: #fbfbfb; height: 37px; width: 113px; margin-top: -8px; border-radius: 0 0 7px 7px; text-align: center; position: relative; line-height: 36px; font-size: 18.200px; }
.active-tab b { font-weight: 500; }
.active-tab::after { content: ""; position: absolute; left: 11px; right: 10px; bottom: 2px; height: 3px; background: #107c41; }
.s3 { margin-left: 11px; width: 90px; }
.plus { margin-left: 62px; flex: none; }
.tdots { position: absolute; left: 825px; top: 7px; font-weight: 700; font-size: 18px; line-height: 28px; z-index: 2; }
.hscroll {
  position: absolute; left: 855px; top: 10px; width: 497px; height: 23px; background: #f8f8f8; border-radius: 11px;
  display: flex; align-items: center; padding: 0 6px 0 5px; justify-content: space-between; z-index: 2;
}
.hscroll i { display: block; width: 428px; height: 13px; border-radius: 7px; background: #6f6f6f; margin-left: 27px; }
.watermark {
  position: absolute; left: 807px; top: 610px; width: 230px; text-align: center; transform: scaleX(1.3);
  font: bold 50px/50px "DejaVu Sans", sans-serif; color: transparent; -webkit-text-stroke: 2px #cfd1d3; z-index: 1; pointer-events: none; direction: rtl;
}

/* panel */
.panel { width: 468px; background: #fbfbfb; flex: none; padding: 0 14px 0 16px; font-family: "Open Sans", "Noto Sans", sans-serif; font-size: 14.500px; color: #333; }
.p-head { height: 59px; display: flex; align-items: center; padding-left: 2px; padding-top: 16px; }
.p-title { font-size: 18.500px; font-weight: 600; color: #333; flex: 1; }
.p-ch { margin-right: 41px; flex: none; }
.p-x { margin-right: 5px; flex: none; }
.p-cols { display: flex; }
.p-left { width: 212px; flex: none; }
.ptab { display: inline-block; height: 40px; line-height: 38px; font-size: 15px; margin-right: 34px; width: 48px; }
.ptab.on { border-bottom: 2px solid #107c41; color: #444; }
.ptab:last-child { width: auto; }
.p-tabs { height: 40px; }
.p-choose { display: flex; justify-content: space-between; align-items: center; height: 46px; padding-left: 2px; line-height: 21px; margin-top: 5px; }
.gear { width: 62px; height: 38px; border: 1px solid #a9a9a9; display: flex; align-items: center; justify-content: center; gap: 8px; background: #fff; margin-top: -8px; }
.p-search { height: 32px; margin-top: 12px; border: 1.500px solid #a9a9a9; display: flex; align-items: center; justify-content: space-between; padding: 0 3px 0 8px; color: #888; background: #fff; }
.p-list { height: 402px; margin-top: 26px; border: 1.500px solid #a9a9a9; background: #fff; overflow: hidden; position: relative; }
.fieldhead { height: 20px; display: flex; align-items: center; padding: 0 0 0 10px; gap: 5px; font-size: 15.500px; }
.fieldhead b { font-weight: 700; margin-left: -3px; white-space: nowrap; }
.tw { margin-right: 3px; }
.field { height: 32.600px; display: flex; align-items: center; padding-left: 52px; white-space: nowrap; font-size: 15px; }
.field i { display: block; width: 17px; height: 17px; border: 1px solid #9a9a9a; margin-right: 9px; flex: none; background: #fff; }
.lscroll { position: absolute; right: 6px; top: 7px; bottom: 7px; width: 12px; display: flex; flex-direction: column; }
.lscroll i { display: block; width: 12px; height: 149px; background: #6f6f6f; margin-top: 8px; flex: none; }
.ldown { margin-top: auto; }

.p-right { width: 222px; margin-left: 8px; border-left: 2px dotted #e4e4e4; position: relative; flex: none; padding-left: 10px; }
.p-drag { line-height: 20px; width: 200px; font-size: 14.500px; height: 58px; }
.area { height: 115px; width: 207px; position: relative; margin-left: -2px; }
.area.div { border-top: 1px solid #c4c4c4; }
.a-label { height: 24px; display: flex; align-items: center; gap: 11px; position: relative; top: 11px; padding-left: 5px; font-size: 15px; }
.a-box { position: absolute; top: 42px; left: 0; right: 0; height: 64px; border-left: 1px solid #ececec; }
.a-box.lined { top: 38px; height: 68px; border-top: 1px solid #ececec; }
.a-drop { height: 26px; width: 204px; border: 1px solid #a9a9a9; background: #fff; display: flex; align-items: center; justify-content: space-between; padding: 0 6px 0 9px; font-size: 15px; }
.p-defer { display: flex; align-items: center; height: 34px; position: absolute; top: 544px; left: 12px; width: 204px; }
.p-defer i { display: block; width: 17px; height: 17px; border: 1px solid #9a9a9a; background: #fff; flex: none; }
.p-defer span { margin-left: 10px; flex: 1; white-space: nowrap; }
.update { width: 67px; height: 32px; border: 2px solid #e6e6e6; background: #fbfbfb; color: #bcbcbc; font: 600 14px "Open Sans", sans-serif; padding: 0; flex: none; }

/* status */
.status { height: 23px; background: #fbfbfb; display: flex; align-items: center; font-size: 14px; padding: 7px 0 0 16px; overflow: hidden; }
.ready { width: 67px; color: #444; flex: none; }
.acc { flex: none; }
.acc-t { margin-left: 4px; font-weight: 500; color: #333; white-space: nowrap; font-size: 14.600px; }
.view { width: 53px; height: 23px; margin-top: -7px; padding-top: 7px; display: flex; align-items: center; justify-content: center; flex: none; }
.view.on { background: #d9d9d9; }
.z-minus { margin-left: 10px; flex: none; }
.slider { width: 135px; height: 2px; background: #777; position: relative; margin-left: 7px; flex: none; }
.slider i { position: absolute; left: 44px; top: -7px; width: 5px; height: 16px; background: #666; }
.slider b { position: absolute; left: 67px; top: -4px; width: 1px; height: 9px; background: #777; }
.z-plus { margin-left: 6px; flex: none; }
.zoomv { margin-left: 18px; margin-right: 14px; color: #444; flex: none; }
```
